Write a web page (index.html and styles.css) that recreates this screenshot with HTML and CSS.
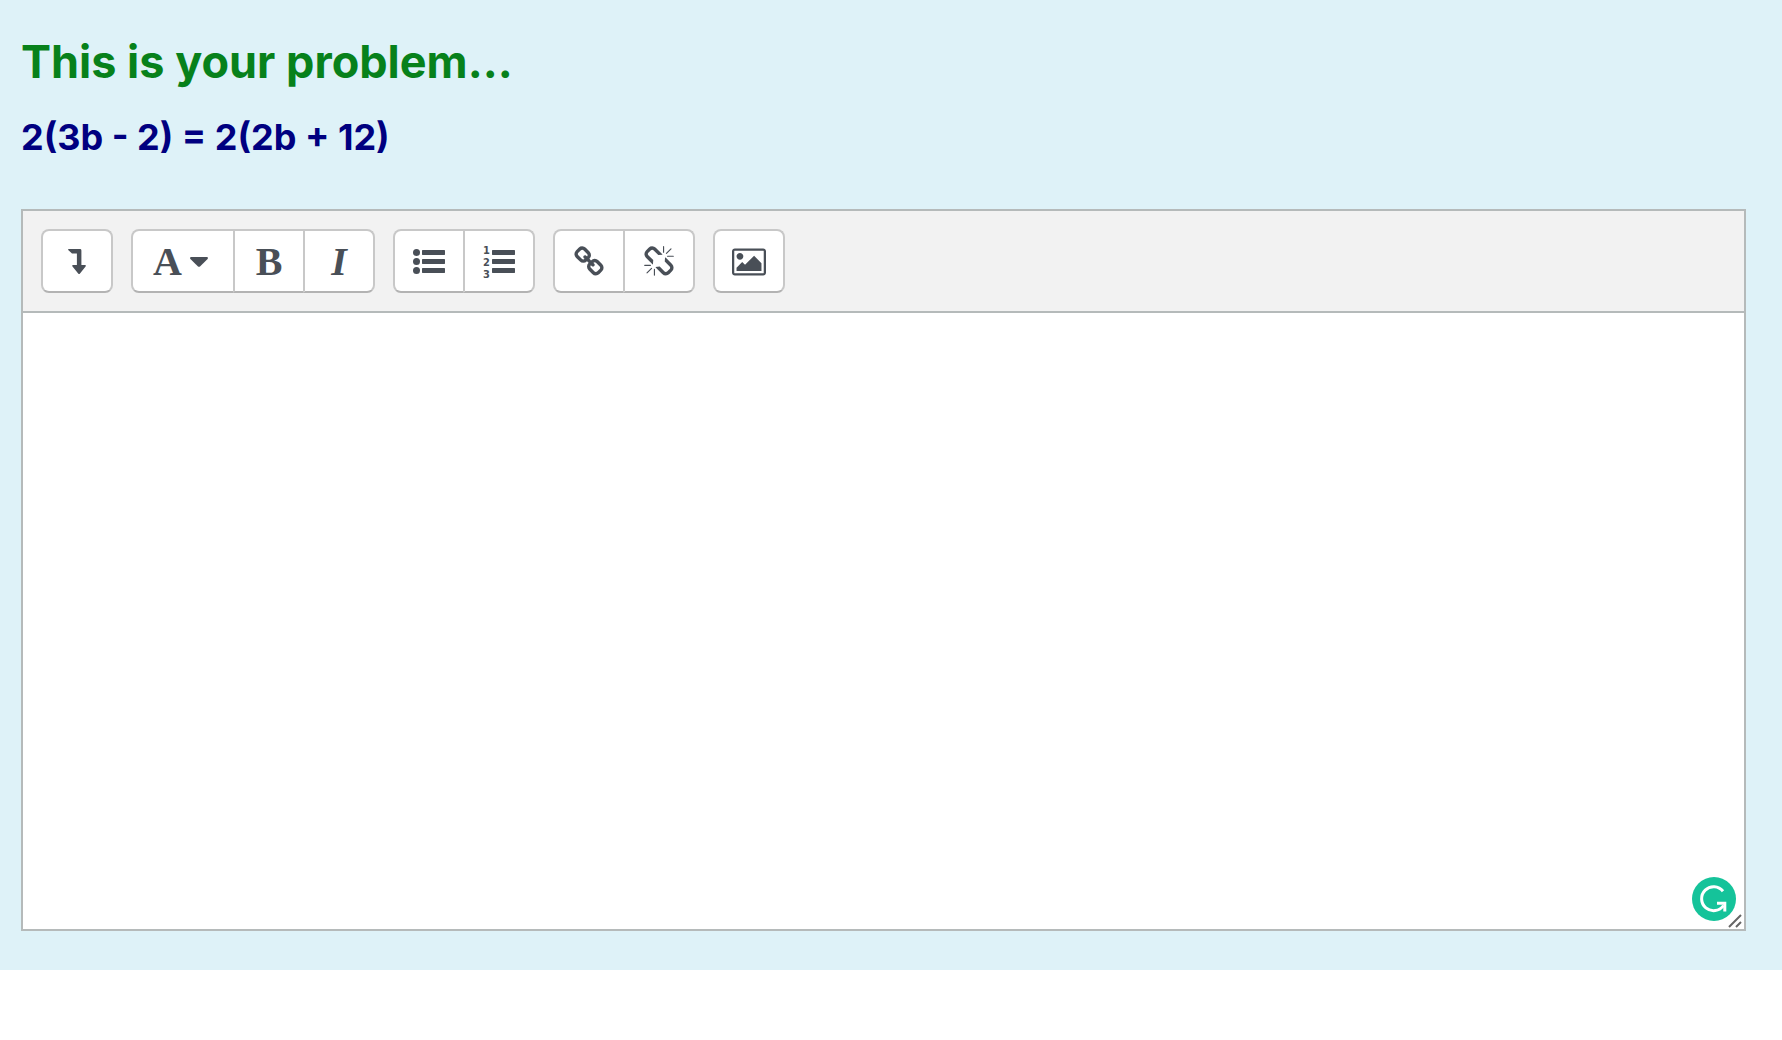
FILE: index.html
```html
<!DOCTYPE html>
<html lang="en">
<head>
    <meta charset="utf-8">
    <title>Your Problem</title>
    <link rel="stylesheet" href="styles.css">
</head>
<body>
    <main class="question">
        <h1>This is your problem...</h1>
        <h2>2(3b - 2) = 2(2b + 12)</h2>

        <div class="editor">
            <div class="toolbar" role="toolbar" aria-label="Editor toolbar">
                <div class="group">
                    <button type="button" aria-label="Show more buttons">
                        <svg width="18" height="26" viewBox="0 0 18 26"><path d="M.6 0H12q1.400 0 1.400 1.400V16H17q1.400 0 .6 1.400L12 24.500q-.9 1-1.800 0L4.500 17.400Q3.700 16 5 16H8.900V4.600H4.500q-.6 0-1-.5L.2 1Q-.2 0 .6 0z"/></svg>
                    </button>
                </div>
                <div class="group">
                    <button type="button" class="styles" aria-label="Paragraph styles">
                        <span class="letter">A</span>
                        <svg width="18" height="10" viewBox="0 0 18 10"><path d="M1.100 0h15.800q1.600.4.700 1.900l-7.600 7.500q-1 .9-2 0L.4 1.900Q-.5.4 1.100 0z"/></svg>
                    </button>
                    <button type="button" aria-label="Bold"><span class="letter">B</span></button>
                    <button type="button" aria-label="Italic"><span class="letter italic">I</span></button>
                </div>
                <div class="group">
                    <button type="button" aria-label="Unordered list">
                        <svg width="32" height="32" viewBox="0 0 32 32">
                            <circle cx="3.500" cy="6.500" r="3.500"/>
                            <circle cx="3.500" cy="15.500" r="3.500"/>
                            <circle cx="3.500" cy="24.500" r="3.500"/>
                            <rect x="9" y="4.100" width="23" height="4.800" rx=".6"/>
                            <rect x="9" y="13.100" width="23" height="4.800" rx=".6"/>
                            <rect x="9" y="22.100" width="23" height="4.800" rx=".6"/>
                        </svg>
                    </button>
                    <button type="button" aria-label="Ordered list">
                        <svg class="numbers" width="32" height="32" viewBox="0 0 32 32">
                            <text x="0" y="8">1</text>
                            <text x="0" y="20">2</text>
                            <text x="0" y="32">3</text>
                            <rect x="9" y="4.100" width="23" height="4.800" rx=".6"/>
                            <rect x="9" y="13.100" width="23" height="4.800" rx=".6"/>
                            <rect x="9" y="22.100" width="23" height="4.800" rx=".6"/>
                        </svg>
                    </button>
                </div>
                <div class="group">
                    <button type="button" aria-label="Link">
                        <svg width="32" height="32" viewBox="0 0 1792 1792"><path d="M1520 1216q0-40-28-68l-208-208q-28-28-68-28-42 0-72 32 3 3 19 18.500t21.500 21.500 15 19 13 25.500 3.500 27.500q0 40-28 68t-68 28q-15 0-27.500-3.500t-25.500-13-19-15-21.500-21.500-18.500-19q-33 31-33 73 0 40 28 68l206 207q27 27 68 27 40 0 68-26l147-146q28-28 28-67zm-703-705q0-40-28-68l-206-207q-28-28-68-28-39 0-68 27l-147 146q-28 28-28 67 0 40 28 68l208 208q27 27 68 27 42 0 72-31-3-3-19-18.500t-21.500-21.500-15-19-13-25.500-3.500-27.500q0-40 28-68t68-28q15 0 27.500 3.500t25.500 13 19 15 21.500 21.500 18.500 19q33-31 33-73zm895 705q0 120-85 203l-147 146q-83 83-203 83-121 0-204-85l-206-207q-83-83-83-203 0-123 88-209l-88-88q-86 88-208 88-120 0-204-84l-208-208q-84-84-84-204t85-203l147-146q83-83 203-83 121 0 204 85l206 207q83 83 83 203 0 123-88 209l88 88q86-88 208-88 120 0 204 84l208 208q84 84 84 204z"/></svg>
                    </button>
                    <button type="button" aria-label="Unlink">
                        <svg width="32" height="32" viewBox="0 0 1792 1792"><path d="M503 1271l-256 256q-10 9-23 9-12 0-23-9-9-10-9-23t9-23l256-256q10-9 23-9t23 9q9 10 9 23t-9 23zm169 41v320q0 14-9 23t-23 9-23-9-9-23v-320q0-14 9-23t23-9 23 9 9 23zm-224-224q0 14-9 23t-23 9h-320q-14 0-23-9t-9-23 9-23 23-9h320q14 0 23 9t9 23zm1264 128q0 120-85 203l-147 146q-83 83-203 83-121 0-204-85l-334-335q-21-21-42-56l239-18 273 274q28 28 68 27.500t68-27.500l147-146q28-28 28-67 0-40-28-68l-274-275 18-239q35 21 56 42l336 336q84 86 84 204zm-617-724l-239 18-273-274q-28-28-68-28-39 0-68 27l-147 146q-28 28-28 67 0 40 28 68l274 274-18 240q-35-21-56-42l-336-336q-84-86-84-204 0-120 85-203l147-146q83-83 203-83 121 0 204 85l334 335q21 21 42 56zm633 84q0 14-9 23t-23 9h-320q-14 0-23-9t-9-23 9-23 23-9h320q14 0 23 9t9 23zm-544-544v320q0 14-9 23t-23 9-23-9-9-23v-320q0-14 9-23t23-9 23 9 9 23zm407 151l-256 256q-11 9-23 9t-23-9q-9-10-9-23t9-23l256-256q10-9 23-9t23 9q9 10 9 23t-9 23z"/></svg>
                    </button>
                </div>
                <div class="group">
                    <button type="button" aria-label="Insert image">
                        <svg width="34" height="32" viewBox="-64 0 1920 1792"><path d="M576 576q0 80-56 136t-136 56-136-56-56-136 56-136 136-56 136 56 56 136zm1024 384v448h-1408v-192l320-320 160 160 512-512zm96-704h-1600q-13 0-22.500 9.500t-9.500 22.500v1216q0 13 9.500 22.500t22.500 9.500h1600q13 0 22.500-9.500t9.500-22.500v-1216q0-13-9.500-22.500t-22.500-9.500zm160 32v1216q0 66-47 113t-113 47h-1600q-66 0-113-47t-47-113v-1216q0-66 47-113t113-47h1600q66 0 113 47t47 113z"/></svg>
                    </button>
                </div>
            </div>
            <textarea class="answer" aria-label="Answer"></textarea>
            <button type="button" class="checker" aria-label="Check writing">
                <svg width="44" height="44" viewBox="0 0 44 44">
                    <path d="M31 14.200A12 12 0 1 0 31.500 28.500"/>
                    <path d="M25 26.300H32.800V34.500"/>
                </svg>
            </button>
            <svg class="grip" width="14" height="14" viewBox="0 0 14 14"><path d="M1 13L13 1M8 13L13 8"/></svg>
        </div>
    </main>
</body>
</html>
```

FILE: styles.css
```css
body {
    font-family: Inter, sans-serif;
    background-color: #fff;
    margin: 0;
}

.question {
    background-color: #def2f8;
    padding: 32px 36px 39px 21px;
}

h1 {
    font-size: 45px;
    line-height: 60px;
    color: #07811b;
    margin: 0 0 23px;
}

h2 {
    font-size: 36px;
    line-height: 44px;
    color: #000080;
    margin: 0 0 50px;
}

.editor {
    position: relative;
    border: 2px solid #b5baba;
}

.toolbar {
    display: flex;
    flex-wrap: wrap;
    gap: 18px;
    padding: 18px;
    background-color: #f2f2f2;
    border-bottom: 2px solid #b5baba;
}

.group {
    display: flex;
}

.group button {
    display: flex;
    align-items: center;
    justify-content: center;
    box-sizing: border-box;
    width: 72px;
    height: 64px;
    padding: 2px 0 0;
    background-color: #fff;
    border: 2px solid #c8c8c8;
    border-bottom-color: #b3b3b3;
    color: #494f57;
    cursor: pointer;
}

.group button + button {
    margin-left: -2px;
}

.group button:first-child {
    border-top-left-radius: 8px;
    border-bottom-left-radius: 8px;
}

.group button:last-child {
    border-top-right-radius: 8px;
    border-bottom-right-radius: 8px;
}

.group button:hover {
    background-color: #f7f7f7;
}

.group .styles {
    width: 104px;
    gap: 8px;
    padding-right: 5px;
}

.group svg {
    fill: #494f57;
}

.letter {
    font-family: "Liberation Serif", serif;
    font-size: 40px;
    font-weight: bold;
    line-height: 44px;
}

.italic {
    font-style: italic;
}

.numbers {
    overflow: visible;
}

.numbers text {
    font-family: "DejaVu Sans Condensed", "DejaVu Sans", sans-serif;
    font-size: 11px;
    font-weight: bold;
}

.answer {
    display: block;
    box-sizing: border-box;
    width: 100%;
    height: 616px;
    padding: 18px;
    border: 0;
    outline: none;
    resize: none;
    background-color: #fff;
    font-family: inherit;
    font-size: 28px;
}

/* Floating badge and resize grip in the corner of the text area */
.checker {
    position: absolute;
    right: 8px;
    bottom: 8px;
    width: 44px;
    height: 44px;
    padding: 0;
    border: 0;
    border-radius: 50%;
    background-color: #15c39a;
    cursor: pointer;
}

.checker svg {
    display: block;
    fill: none;
    stroke: #fff;
    stroke-width: 3;
}

.grip {
    position: absolute;
    right: 2px;
    bottom: 1px;
    fill: none;
    stroke: #666;
    stroke-width: 2;
}
```
